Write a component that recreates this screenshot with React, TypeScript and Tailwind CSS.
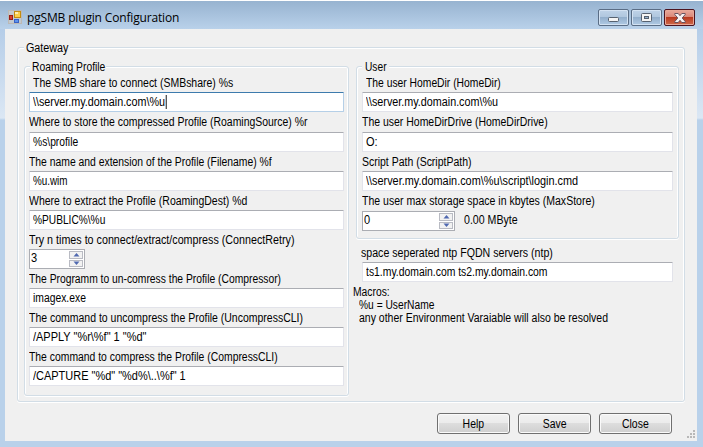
import React from "react";

const groupLine =
  "rounded-[3px] border border-[#d2dde6] shadow-[0_1px_0_#fff,inset_1px_1px_0_#fff,inset_-1px_0_0_#fff]";

function Text({ children, fit = "scale-x-[0.87]" }: { children: React.ReactNode; fit?: string }) {
  return <span className={`block w-fit origin-left whitespace-pre leading-[14px] ${fit}`}>{children}</span>;
}

function Label({ children, fit, className = "" }: { children: React.ReactNode; fit?: string; className?: string }) {
  return (
    <div className={`h-[14px] whitespace-pre leading-[14px] ${className}`}>
      <Text fit={fit}>{children}</Text>
    </div>
  );
}

function Legend({ children, fit, className = "" }: { children: React.ReactNode; fit?: string; className?: string }) {
  return (
    <div className={`-mt-[7px] h-[14px] whitespace-pre bg-[#f0f0f0] leading-[14px] ${className}`}>
      <Text fit={fit}>{children}</Text>
    </div>
  );
}

function Field({ value, fit, focused = false, className = "" }: { value: string; fit?: string; focused?: boolean; className?: string }) {
  const edge = focused
    ? "border-[#b5cfe7] border-t-[#3d7bad]"
    : "border-[#e2e3ea] border-t-[#abadb3]";
  return (
    <div className={`flex h-5 items-center rounded-[1px] border bg-white pl-[2.5px] ${edge} ${className}`}>
      <Text fit={fit}>
        {value}
        {focused && <span className="ml-[1px] inline-block h-[14px] w-[1.2px] bg-black align-top" />}
      </Text>
    </div>
  );
}

function SpinnerArrow({ d }: { d: string }) {
  return (
    <span className="flex h-[8px] items-center justify-center border border-[#b9bbc3] bg-[#f2f2f2]">
      <svg width="7" height="4" viewBox="0 0 7 4">
        <path d={d} fill="#5069b0" />
      </svg>
    </span>
  );
}

function Spinner({ value, className = "" }: { value: string; className?: string }) {
  return (
    <div className={`flex h-5 justify-between border border-[#abadb3] bg-white pl-px pr-px ${className}`}>
      <span className="mt-[1px]">
        <Text fit="scale-x-[0.92]">{value}</Text>
      </span>
      <span className="flex w-[14px] flex-col gap-px py-px">
        <SpinnerArrow d="M3.5 0 6.5 3.5h-6z" />
        <SpinnerArrow d="M3.5 4 6.5 .5h-6z" />
      </span>
    </div>
  );
}

function PushButton({ children }: { children: React.ReactNode }) {
  return (
    <div className="flex h-[21px] w-[73px] shrink-0 items-center justify-center rounded-[3px] border border-[#707070] bg-[linear-gradient(#f2f2f2_0%,#ebebeb_48%,#dddddd_50%,#cfcfcf_100%)] shadow-[inset_0_0_0_1px_#fafafa]">
      <span className="scale-x-[0.87] leading-[14px]">{children}</span>
    </div>
  );
}

function CaptionButton({ close = false, children }: { close?: boolean; children: React.ReactNode }) {
  const tone = close
    ? "border-[#4c1420] bg-[linear-gradient(#e9a99c_0%,#d98676_48%,#b93a20_50%,#cf6a4c_100%)] shadow-[inset_0_0_0_1px_#e8a898]"
    : "border-[#5a6d85] bg-[linear-gradient(#bfd3e8_0%,#afc6de_48%,#93afcc_50%,#b0cae4_100%)] shadow-[inset_0_0_0_1px_#d3e2f2]";
  return (
    <div className={`flex h-[17px] w-[31px] items-center justify-center rounded-[2px] border ${tone}`}>{children}</div>
  );
}

function TitleBar() {
  return (
    <header className="flex h-[29px] border-t border-white bg-linear-to-b from-[#97b3d0] to-[#b9d1ea] pl-[8px] pr-[8px]">
      <svg className="mt-[9px]" width="14" height="14" viewBox="0 0 14 14">
        <rect x=".5" y=".5" width="13" height="13" fill="#c3c9cf" stroke="#bcb9b5" />
        <rect x="1.5" y="5.5" width="3" height="4" fill="#d8402c" stroke="#9c1c14" />
        <rect x="6.5" y="1.5" width="6" height="6" fill="#fbd04a" stroke="#c48c10" />
        <rect x="7" y="2" width="3" height="2" fill="#ffeeb0" />
        <rect x="6.5" y="9.5" width="4" height="3" fill="#5c93ee" stroke="#3a62c4" />
      </svg>
      <h1 className="ml-[5px] mt-[8px] whitespace-pre font-['Open_Sans','Noto_Sans',sans-serif] text-[12px] leading-[18px] tracking-[-0.16px] text-black">
        pgSMB plugin Configuration
      </h1>
      <div className="ml-auto mt-[8px] flex gap-[2px]">
        <CaptionButton>
          <svg className="mt-[3px]" width="11" height="5" viewBox="0 0 11 5">
            <rect x=".5" y=".5" width="10" height="4" rx="1" fill="#f4f4f4" stroke="#56616f" />
          </svg>
        </CaptionButton>
        <CaptionButton>
          <svg width="11" height="9" viewBox="0 0 11 9">
            <rect x=".5" y=".5" width="10" height="8" rx="1" fill="#f4f4f4" stroke="#56616f" />
            <rect x="3.5" y="3.5" width="4" height="2" fill="#93afcc" stroke="#56616f" />
          </svg>
        </CaptionButton>
        <CaptionButton close>
          <svg width="12" height="10" viewBox="0 0 12 10">
            <path d="M.8.5h3.4L6 2.7 7.8.5h3.4v1L8.2 5l3 3.5v1H7.8L6 7.3 4.2 9.5H.8v-1L3.8 5l-3-3.5z" fill="#f6f2f2" stroke="#5c4a58" strokeWidth=".9" />
          </svg>
        </CaptionButton>
      </div>
    </header>
  );
}

type RowProps = { label: string; value: string; labelFit?: string; valueFit?: string };

const profileRows: RowProps[] = [
  { label: "The name and extension of the Profile (Filename) %f", value: "%u.wim", labelFit: "scale-x-[0.864]", valueFit: "scale-x-[0.82]" },
  { label: "Where to extract the Profile (RoamingDest) %d", value: "%PUBLIC%\\%u", labelFit: "scale-x-[0.873]", valueFit: "scale-x-[0.847]" },
];

const commandRows: RowProps[] = [
  { label: "The Programm to un-comress the Profile (Compressor)", value: "imagex.exe", labelFit: "scale-x-[0.859]", valueFit: "scale-x-[0.862]" },
  { label: "The command to uncompress the Profile (UncompressCLI)", value: "/APPLY \"%r\\%f\" 1 \"%d\"", labelFit: "scale-x-[0.874]", valueFit: "scale-x-[0.915]" },
  { label: "The command to compress the Profile (CompressCLI)", value: "/CAPTURE \"%d\" \"%d%\\..\\%f\" 1", labelFit: "scale-x-[0.865]", valueFit: "scale-x-[0.914]" },
];

function Row({ label, value, labelFit, valueFit }: RowProps) {
  return (
    <div>
      <Label className="mb-[2px] mt-[3px]" fit={labelFit}>{label}</Label>
      <Field value={value} fit={valueFit} />
    </div>
  );
}

function ProfileGroup() {
  return (
    <section className={`h-[330px] w-[325px] px-[4px] ${groupLine}`}>
      <Legend className="ml-[1px] w-[76px] pl-[2px]" fit="scale-x-[0.859]">Roaming Profile</Legend>
      <Label className="mb-[2px] ml-[4px] mt-[2px]" fit="scale-x-[0.873]">The SMB share to connect (SMBshare) %s</Label>
      <Field value={"\\\\server.my.domain.com\\%u"} fit="scale-x-[0.897]" focused />
      <Label className="mb-[3px] mt-[3px]" fit="scale-x-[0.87]">Where to store the compressed Profile (RoamingSource) %r</Label>
      <Field value={"%s\\profile"} fit="scale-x-[0.857]" />
      {profileRows.map((r) => <Row key={r.label} {...r} />)}
      <Label className="mb-[2px] mt-[3px]" fit="scale-x-[0.894]">Try n times to connect/extract/compress (ConnectRetry)</Label>
      <Spinner value="3" className="w-[56px]" />
      {commandRows.map((r) => <Row key={r.label} {...r} />)}
    </section>
  );
}

function UserGroup() {
  return (
    <section className={`h-[173px] w-[323px] pl-[5px] pr-[5px] ${groupLine}`}>
      <Legend className="w-[27px] pl-[3px]" fit="scale-x-[0.85]">User</Legend>
      <Label className="mb-[2px] ml-[4px] mt-[2px]" fit="scale-x-[0.86]">The user HomeDir (HomeDir)</Label>
      <Field value={"\\\\server.my.domain.com\\%u"} fit="scale-x-[0.897]" />
      <Label className="mb-[3px] mt-[3px]" fit="scale-x-[0.873]">The user HomeDirDrive (HomeDirDrive)</Label>
      <Field value="O:" fit="scale-x-[0.92]" />
      <Row
        label="Script Path (ScriptPath)"
        value={"\\\\server.my.domain.com\\%u\\script\\login.cmd"}
        labelFit="scale-x-[0.873]"
        valueFit="scale-x-[0.907]"
      />
      <Label className="mb-[3px] mt-[3px]" fit="scale-x-[0.877]">The user max storage space in kbytes (MaxStore)</Label>
      <div className="flex">
        <Spinner value="0" className="w-[93px]" />
        <Label className="ml-[9px] mt-[2px]" fit="scale-x-[0.884]">0.00 MByte</Label>
      </div>
    </section>
  );
}

export default function App() {
  return (
    <div className="flex h-[447px] w-[703px] flex-col overflow-hidden bg-[linear-gradient(#b5cde8_0px,#b5cde8_29px,#dbe7f4_118px,#b9d1ea_120px)] font-['Liberation_Sans',Arial,sans-serif] text-[12px] text-black">
      <TitleBar />
      <main className="ml-[5px] h-[412px] w-[692px] bg-[#f0f0f0] pl-[12px] pt-[18px]">
        <section className={`h-[355px] w-[668px] pl-[6px] ${groupLine}`}>
          <Legend className="w-[46px] pl-[2px]" fit="scale-x-[0.897]">Gateway</Legend>
          <div className="mt-[11px] flex gap-[7px]">
            <ProfileGroup />
            <div>
              <UserGroup />
              <Label className="ml-[5px] mt-[7px]" fit="scale-x-[0.885]">space seperated ntp FQDN servers (ntp)</Label>
              <Field className="ml-[6px] mt-[2px] w-[311px]" fit="scale-x-[0.866]" value="ts1.my.domain.com ts2.my.domain.com" />
              <div className="-ml-[3px] mt-[3px]">
                <Label className="-mb-px" fit="scale-x-[0.86]">Macros:</Label>
                <Label className="-mb-px ml-[6px]" fit="scale-x-[0.853]">%u = UserName</Label>
                <Label className="ml-[6px]" fit="scale-x-[0.875]">any other Environment Varaiable will also be resolved</Label>
              </div>
            </div>
          </div>
        </section>
        <footer className="mt-[11px] flex gap-[8px] pl-[420px]">
          <PushButton>Help</PushButton>
          <PushButton>Save</PushButton>
          <PushButton>Close</PushButton>
          <svg className="ml-[7px] mt-[17px] shrink-0" width="9" height="9" viewBox="0 0 9 9" fill="#b8b8b8">
            <path d="M6 0h2v2H6zM3 3h2v2H3zM6 3h2v2H6zM0 6h2v2H0zM3 6h2v2H3zM6 6h2v2H6z" />
          </svg>
        </footer>
      </main>
    </div>
  );
}
